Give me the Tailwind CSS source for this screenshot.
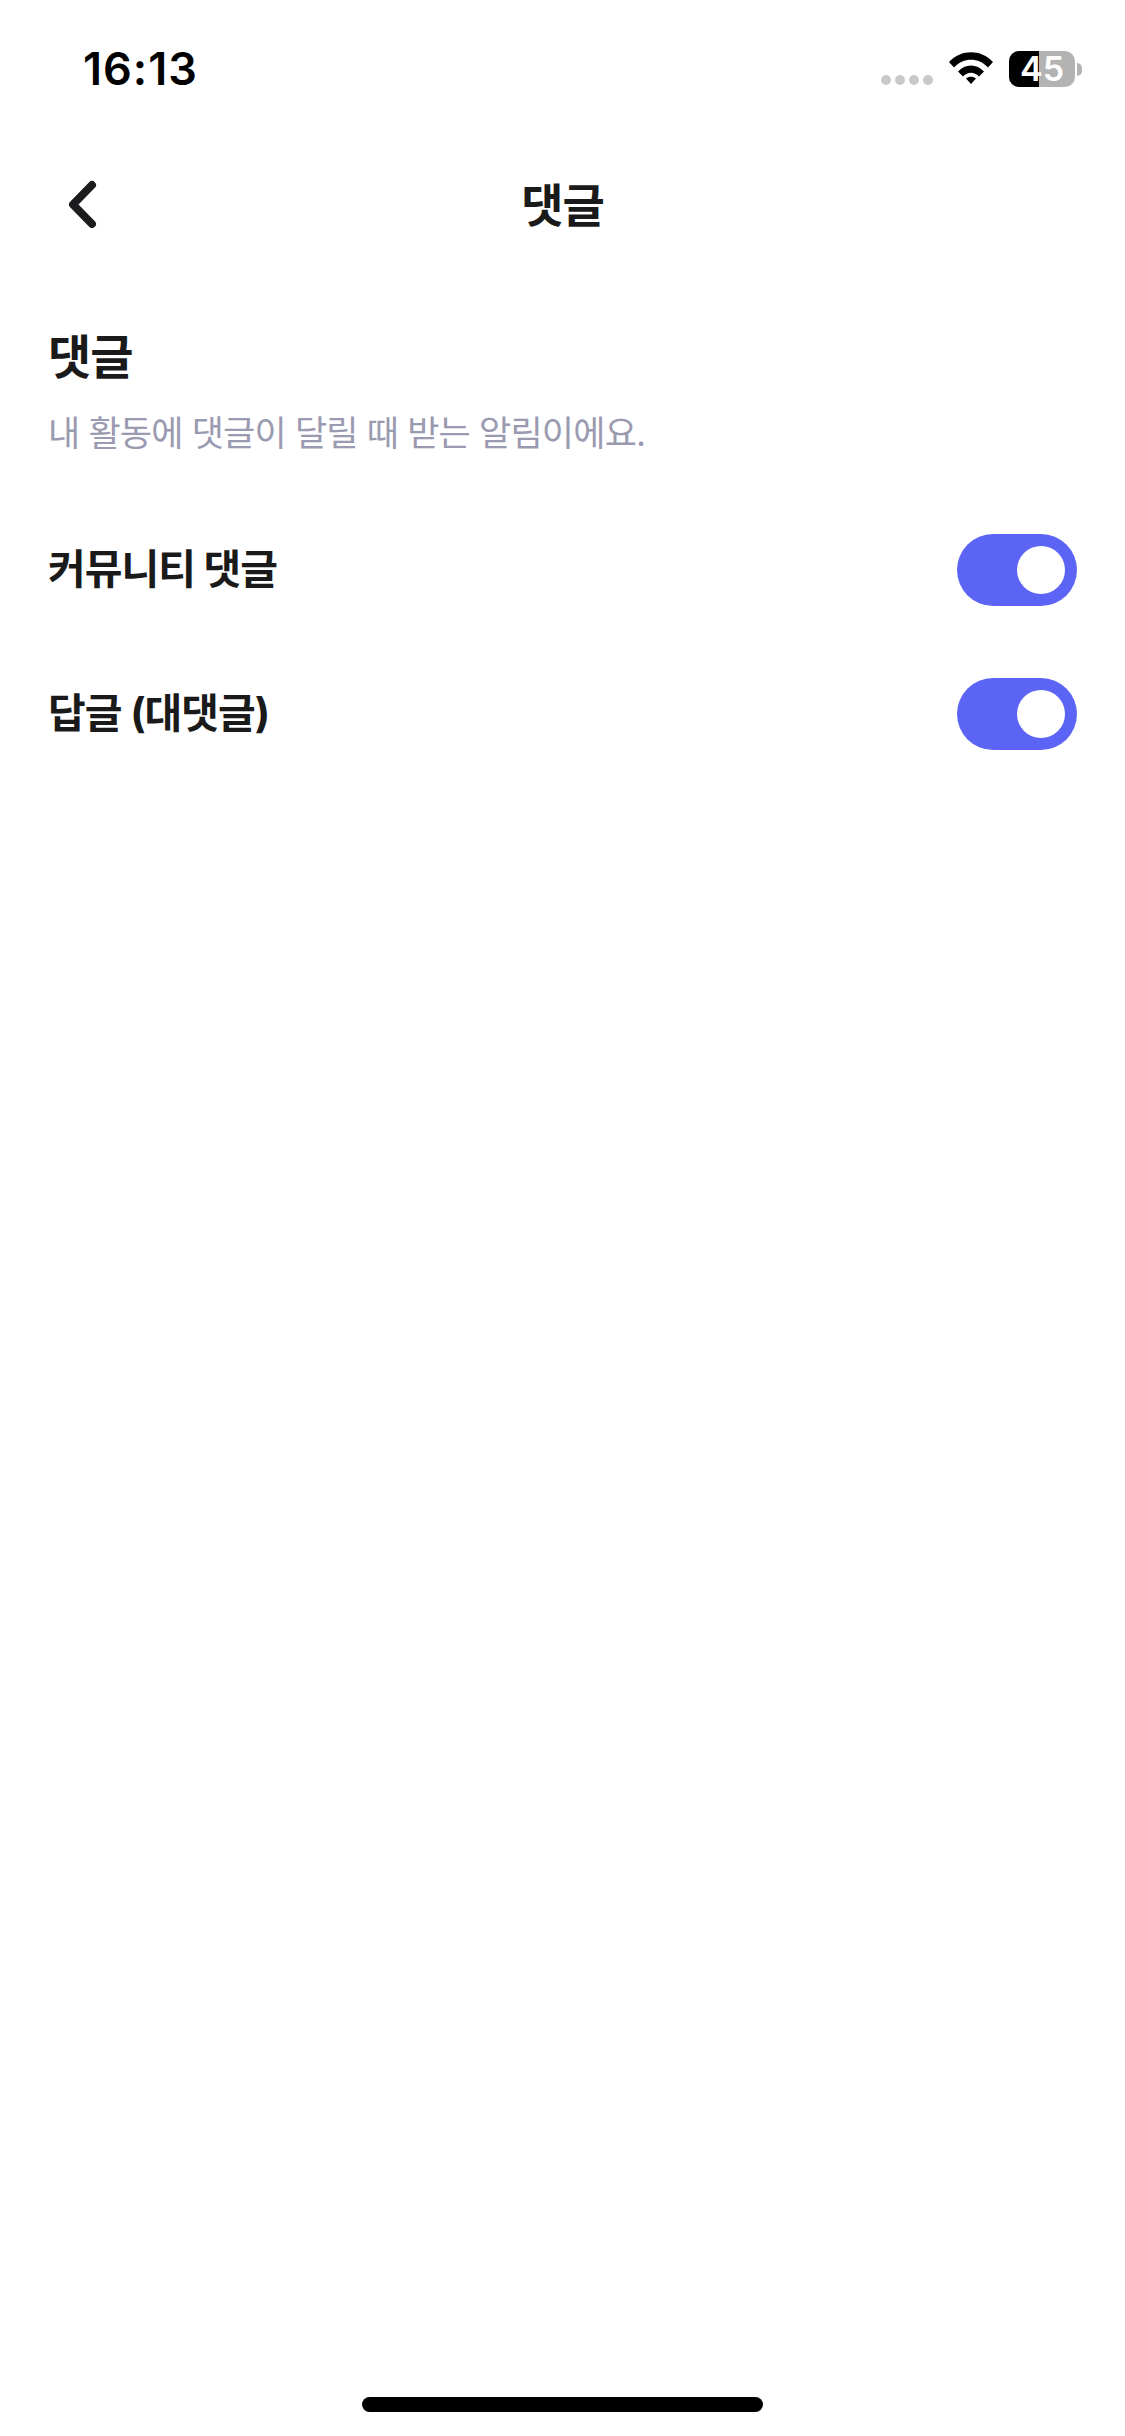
<!DOCTYPE html>
<html lang="ko">
<head>
  <meta charset="UTF-8">
  <title>댓글</title>
  <script src="https://cdn.jsdelivr.net/npm/@tailwindcss/browser@4"></script>
</head>
<body class="bg-white font-['Inter','Noto_Sans_CJK_KR',sans-serif]">
  <div class="w-[1125px] h-[2436px] flex flex-col overflow-hidden">

    <!-- Status bar -->
    <div class="h-[135px] shrink-0 flex items-start pt-[42px] pl-[83px] pr-[43px]">
      <span class="text-[45px] leading-[54px] font-semibold text-black tracking-[1px]">16:13</span>
      <div class="ml-auto flex items-start">
        <div class="flex gap-[4px] mt-[33px]">
          <span class="w-[10px] h-[10px] rounded-full bg-[#c9c9c9]"></span>
          <span class="w-[10px] h-[10px] rounded-full bg-[#c9c9c9]"></span>
          <span class="w-[10px] h-[10px] rounded-full bg-[#c9c9c9]"></span>
          <span class="w-[10px] h-[10px] rounded-full bg-[#c9c9c9]"></span>
        </div>
        <svg class="ml-[15px] mt-[9px]" width="46" height="34" viewBox="0 0 46 34">
          <path d="M1 11 C13 -2 33 -2 45 11 L40 16.500 C31 6 15 6 6 16.500 Z" fill="#000"/>
          <path d="M10 20.500 C17 12.500 29 12.500 36 20.500 L31 25.500 C26 20.500 20 20.500 15 25.500 Z" fill="#000"/>
          <path d="M18 27.500 C21 25 25 25 28 27.500 L23 33 Z" fill="#000"/>
        </svg>
        <div class="ml-[15px] mt-[9px] flex items-center">
          <div class="relative w-[66px] h-[36px] rounded-[10px] bg-[#b3b3b3] flex items-center justify-center">
            <div class="absolute left-0 top-0 bottom-0 w-[30px] rounded-l-[10px] bg-black"></div>
            <span class="relative text-[34px] leading-[36px] font-semibold text-white">45</span>
          </div>
          <div class="ml-[2px] w-[5px] h-[13px] rounded-r-full bg-[#b3b3b3]"></div>
        </div>
      </div>
    </div>

    <!-- Nav -->
    <div class="relative h-[140px] shrink-0 flex items-center justify-center">
      <svg class="absolute left-[64px] top-[44px]" width="36" height="52" viewBox="0 0 36 52" fill="none">
        <path d="M28 6 L9 25.500 L28 45" stroke="#1c1c1e" stroke-width="8" stroke-linecap="round" stroke-linejoin="round"/>
      </svg>
      <span class="text-[46px] leading-none font-bold text-[#1a1a1a] tracking-[-1px]">댓글</span>
    </div>

    <!-- Section header -->
    <div class="px-[48px] pt-[52px]">
      <h2 class="text-[47px] leading-[60px] font-bold text-[#1a1a1a] tracking-[-1px]">댓글</h2>
      <p class="mt-[23px] text-[35px] leading-[46px] text-[#9a9ab0] tracking-[-0.8px]">내 활동에 댓글이 달릴 때 받는 알림이에요.</p>
    </div>

    <!-- Rows -->
    <div class="mt-[78px] pl-[48px] pr-[48px] flex flex-col gap-[72px]">
      <div class="flex items-center justify-between h-[72px]">
        <span class="text-[41px] font-bold text-[#1a1a1a] tracking-[-1px]">커뮤니티 댓글</span>
        <div class="w-[120px] h-[72px] rounded-full bg-[#5c64f5] flex items-center justify-end pr-[12px]">
          <span class="w-[48px] h-[48px] rounded-full bg-white"></span>
        </div>
      </div>
      <div class="flex items-center justify-between h-[72px]">
        <span class="text-[41px] font-bold text-[#1a1a1a] tracking-[-1px]">답글 (대댓글)</span>
        <div class="w-[120px] h-[72px] rounded-full bg-[#5c64f5] flex items-center justify-end pr-[12px]">
          <span class="w-[48px] h-[48px] rounded-full bg-white"></span>
        </div>
      </div>
    </div>

    <!-- Home indicator -->
    <div class="mt-auto mb-[24px] mx-auto w-[401px] h-[15px] rounded-full bg-black"></div>
  </div>
</body>
</html>
